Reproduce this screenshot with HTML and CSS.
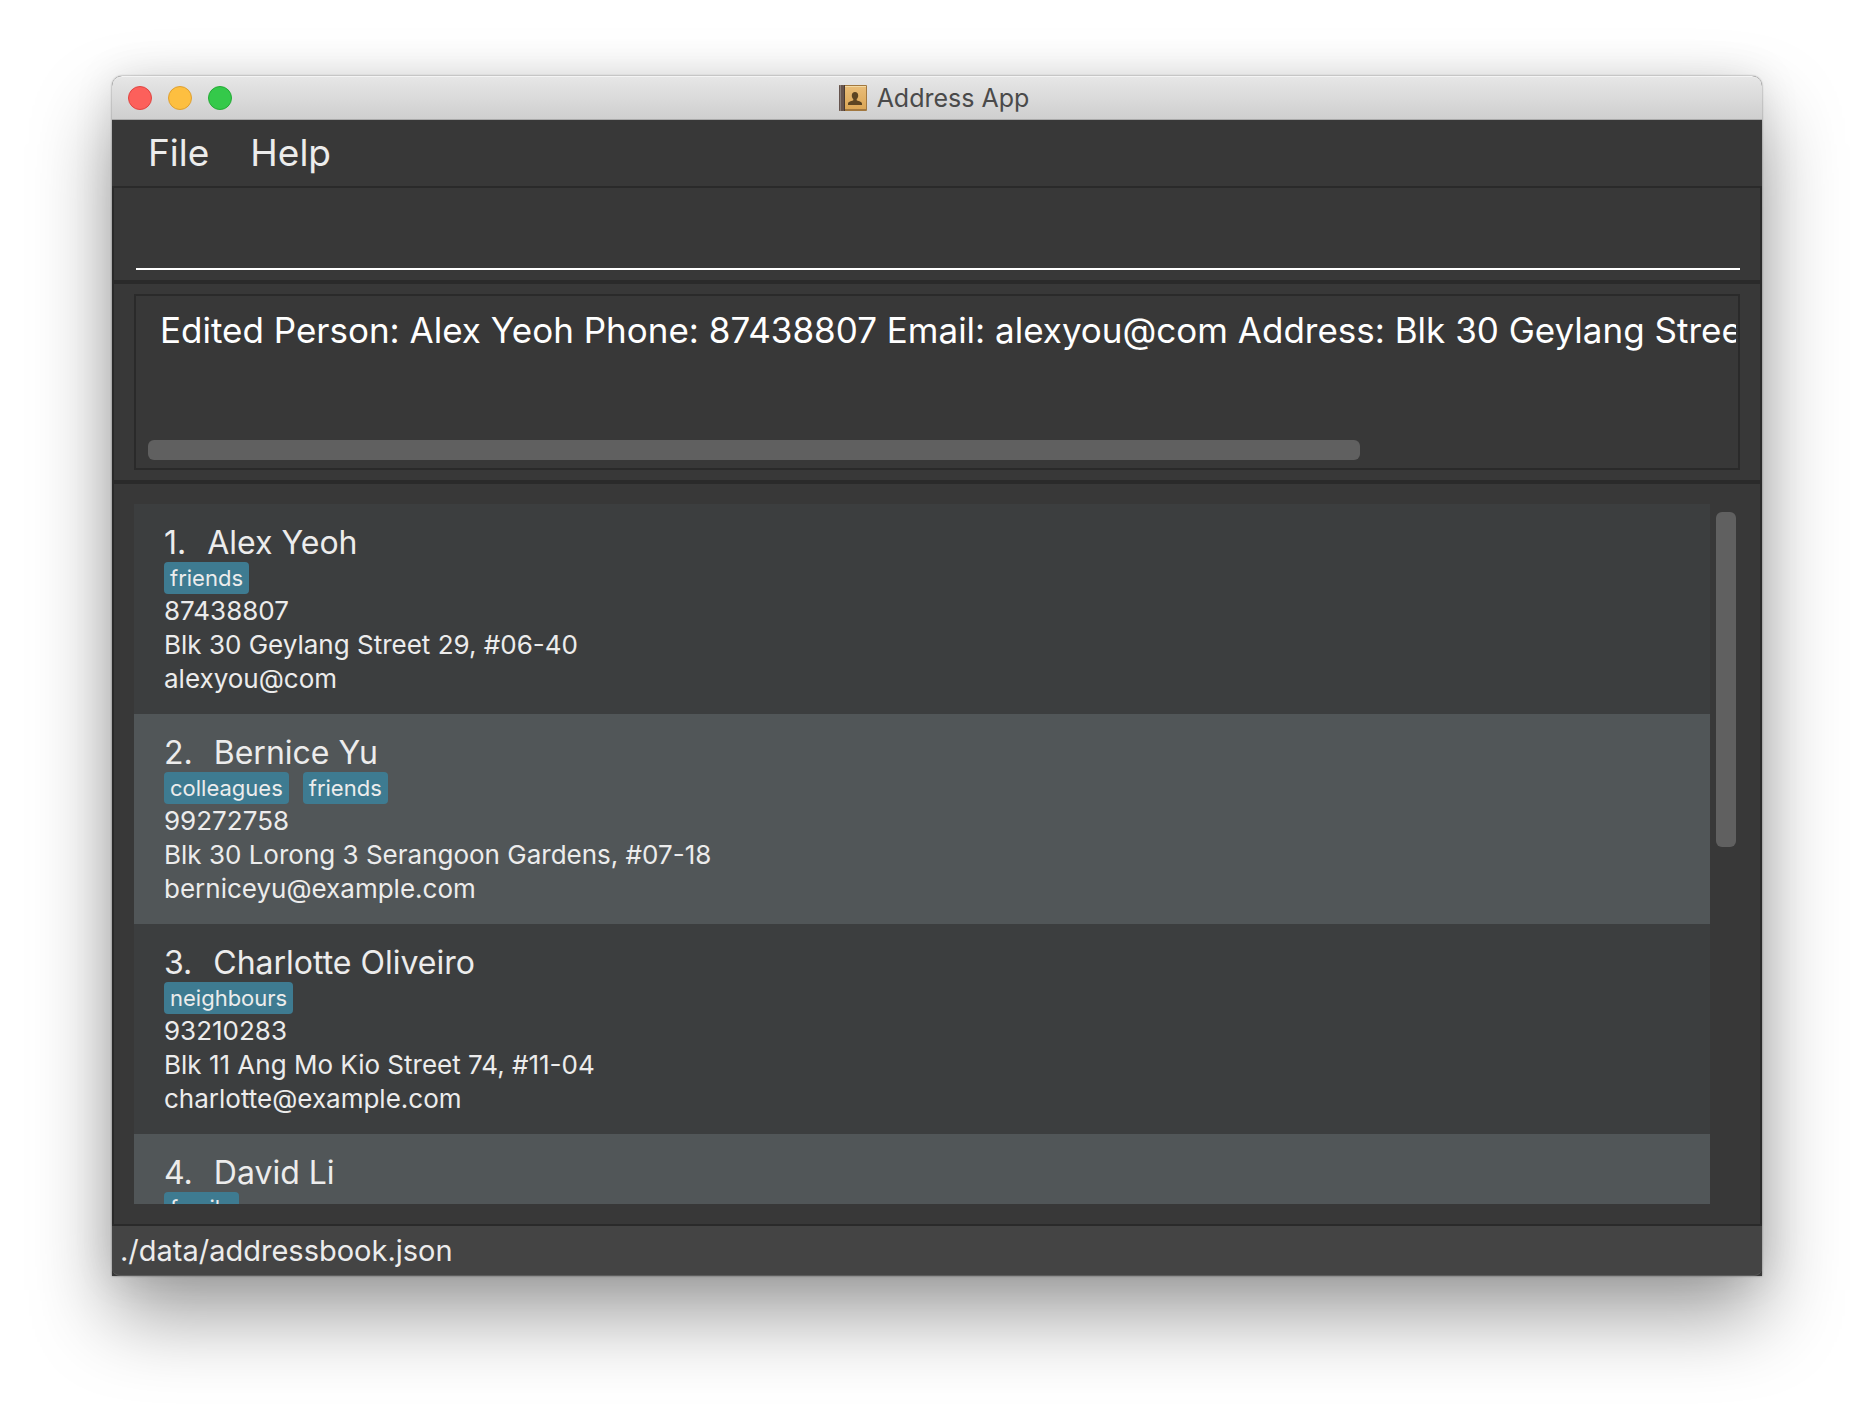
FILE: index.html
```html
<!DOCTYPE html>
<html lang="en">
<head>
<meta charset="utf-8">
<title>Address App</title>
<link rel="stylesheet" href="styles.css">
</head>
<body>
<main class="window">
  <header class="titlebar">
    <div class="lights">
      <button class="light light-close" aria-label="Close"></button>
      <button class="light light-minimize" aria-label="Minimize"></button>
      <button class="light light-zoom" aria-label="Zoom"></button>
    </div>
    <h1 class="title">
      <svg class="title-icon" viewBox="0 0 28 28" aria-hidden="true">
        <defs>
          <linearGradient id="cover" x1="0" y1="0" x2="0" y2="1">
            <stop offset="0" stop-color="#e9bd78"/>
            <stop offset="1" stop-color="#dba656"/>
          </linearGradient>
        </defs>
        <rect x="0" y="1" width="28" height="26" rx="1" fill="#a2783f"/>
        <rect x="6" y="2" width="21" height="23" fill="url(#cover)"/>
        <path d="M6 2.500h21" stroke="#f3d9a2"/>
        <rect x="0" y="1" width="5" height="26" rx="1" fill="#65544e"/>
        <path d="M1.500 1v26" stroke="#8c7f79"/>
        <path d="M5.500 1v26" stroke="#493a32"/>
        <path d="M16 8c2 0 3.200 1.300 3.200 3.400 0 1.600-.6 2.800-1.500 3.600v1.300c.5.800 5.300 1 5.300 3.400V21H9v-1.300c0-2.400 4.800-2.600 5.300-3.400V15c-.9-.8-1.500-2-1.500-3.600C12.800 9.300 14 8 16 8z" fill="#5c4422"/>
      </svg>
      <span>Address App</span>
    </h1>
  </header>

  <nav class="menubar">
    <button class="menu">File</button>
    <button class="menu">Help</button>
  </nav>

  <section class="pane command-pane">
    <input class="command" type="text" aria-label="Command">
  </section>

  <section class="pane result-pane">
    <div class="result">
      <textarea class="result-text" wrap="off" rows="1" readonly aria-label="Result">Edited Person: Alex Yeoh Phone: 87438807 Email: alexyou@com Address: Blk 30 Geylang Street</textarea>
      <div class="track-x"><div class="thumb" style="width: 76.3%"></div></div>
    </div>
  </section>

  <section class="pane list-pane">
    <ul class="people">
      <li class="person">
        <h2 class="name"><span>1.</span><span>Alex Yeoh</span></h2>
        <div class="tags"><span class="tag">friends</span></div>
        <p class="detail">87438807</p>
        <p class="detail">Blk 30 Geylang Street 29, #06-40</p>
        <p class="detail">alexyou@com</p>
      </li>
      <li class="person">
        <h2 class="name"><span>2.</span><span>Bernice Yu</span></h2>
        <div class="tags"><span class="tag">colleagues</span><span class="tag">friends</span></div>
        <p class="detail">99272758</p>
        <p class="detail">Blk 30 Lorong 3 Serangoon Gardens, #07-18</p>
        <p class="detail">berniceyu@example.com</p>
      </li>
      <li class="person">
        <h2 class="name"><span>3.</span><span>Charlotte Oliveiro</span></h2>
        <div class="tags"><span class="tag">neighbours</span></div>
        <p class="detail">93210283</p>
        <p class="detail">Blk 11 Ang Mo Kio Street 74, #11-04</p>
        <p class="detail">charlotte@example.com</p>
      </li>
      <li class="person">
        <h2 class="name"><span>4.</span><span>David Li</span></h2>
        <div class="tags"><span class="tag">family</span></div>
      </li>
    </ul>
    <div class="track-y"><div class="thumb" style="height: 49%"></div></div>
  </section>

  <footer class="statusbar">./data/addressbook.json</footer>
</main>
</body>
</html>
```
FILE: styles.css
```css
* {
  box-sizing: border-box;
}

body {
  margin: 0;
  height: 100vh;
  padding: 76px 112px 148px;
  display: flex;
  background: #fff;
  color: #ececec;
  font-family: Inter, "Liberation Sans", sans-serif;
}

h1, h2, p, ul {
  margin: 0;
  padding: 0;
  font-weight: 400;
}

button, input, textarea {
  margin: 0;
  padding: 0;
  border: 0;
  background: none;
  color: inherit;
  font: inherit;
}

.window {
  flex: 1;
  min-width: 0;
  display: flex;
  flex-direction: column;
  background: #383838;
  border-radius: 10px 10px 0 0;
  box-shadow: 0 0 2px rgba(0, 0, 0, 0.5), 0 40px 80px rgba(0, 0, 0, 0.38), 0 0 40px rgba(0, 0, 0, 0.1);
}

.titlebar {
  height: 44px;
  padding: 0 16px;
  display: grid;
  grid-template-columns: 1fr auto 1fr;
  align-items: center;
  border-top: 1px solid #f4f4f4;
  border-bottom: 1px solid #aaa;
  border-radius: 10px 10px 0 0;
  background: linear-gradient(#e6e6e6, #cfcfcf);
}

.lights {
  display: flex;
  gap: 16px;
}

.light {
  width: 24px;
  height: 24px;
  border: 1px solid;
  border-radius: 50%;
}

.light-close {
  background: #fc605b;
  border-color: #e04542;
}

.light-minimize {
  background: #fdbf40;
  border-color: #dfa031;
}

.light-zoom {
  background: #34c94a;
  border-color: #25ab36;
}

.title {
  display: flex;
  align-items: center;
  gap: 10px;
  padding-right: 6px;
  color: #4a4a4a;
  font-size: 25px;
  line-height: 32px;
}

.title-icon {
  width: 28px;
  height: 28px;
}

.menubar {
  height: 68px;
  padding: 0 36px;
  display: flex;
  gap: 41px;
  border-bottom: 2px solid #2a2a2a;
}

.menu {
  padding-bottom: 2px;
  font-size: 37px;
}

.pane {
  padding: 10px 20px;
  border: 0 solid #2a2a2a;
  border-width: 0 2px 4px;
}

.command-pane {
  height: 96px;
  padding-left: 22px;
}

.command {
  display: block;
  width: 100%;
  height: 72px;
  border-bottom: 2px solid #fff;
  font-size: 35px;
}

.result {
  height: 176px;
  padding: 12px 2px 8px 12px;
  display: flex;
  flex-direction: column;
  justify-content: space-between;
  border: 2px solid #2a2a2a;
}

.result-text {
  width: 100%;
  height: 44px;
  padding-left: 12px;
  overflow: hidden;
  resize: none;
  color: #fff;
  font-size: 35px;
  line-height: 44px;
  white-space: pre;
}

.track-x {
  height: 20px;
}

.thumb {
  width: 100%;
  height: 100%;
  border-radius: 6px;
  background: #606060;
}

.list-pane {
  flex: 1;
  min-height: 0;
  padding-top: 20px;
  padding-bottom: 20px;
  display: flex;
  gap: 6px;
  border-bottom-width: 2px;
}

.people {
  flex: 1;
  overflow: hidden;
  list-style: none;
}

.person {
  height: 210px;
  padding: 20px 30px;
  background: #3c3e3f;
}

.person:nth-child(even) {
  background: #515658;
}

.name {
  display: flex;
  gap: 21px;
  font-size: 32px;
  line-height: 38px;
}

.tags {
  display: flex;
  gap: 14px;
}

.tag {
  padding: 0 6px;
  border-radius: 4px;
  background: #3e7b91;
  font-size: 22px;
  line-height: 32px;
}

.detail {
  font-size: 26px;
  line-height: 34px;
}

.track-y {
  width: 20px;
  margin-right: 4px;
  padding: 8px 0;
}

.statusbar {
  height: 50px;
  padding: 0 8px;
  background: #444;
  border-bottom: 1px solid #5c5c5c;
  border-radius: 0 0 8px 8px;
  font-size: 29px;
  line-height: 50px;
}
```
